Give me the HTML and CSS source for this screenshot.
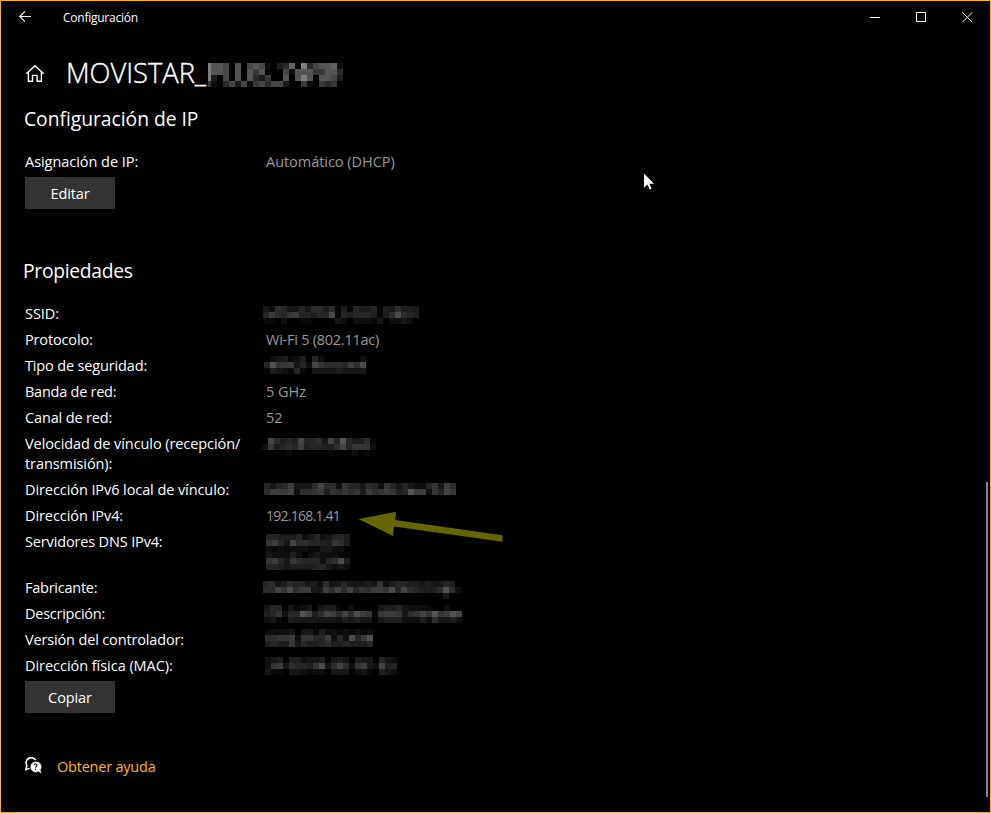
FILE: index.html
```
<!DOCTYPE html>
<html lang="es">
<head>
<meta charset="utf-8">
<title>Configuración</title>
<link rel="stylesheet" href="styles.css">
</head>
<body>
<div class="window">
  <header class="titlebar">
    <svg class="back" width="14" height="12" viewBox="0 0 14 12"><path d="M13 5.5H1.7M6.9 .3 1.7 5.5l5.2 5.2"/></svg>
    <span class="app-name">Configuración</span>
    <svg class="caption" width="11" height="11" viewBox="0 0 11 11"><path d="M0 5.5h10"/></svg>
    <svg class="caption" width="11" height="11" viewBox="0 0 11 11"><path d="M.5 .5h9v9h-9z"/></svg>
    <svg class="caption" width="11" height="11" viewBox="0 0 11 11"><path d="M.3 .3l10 10M10.3 .3l-10 10"/></svg>
  </header>

  <div class="page-title">
    <svg class="home" width="20" height="20" viewBox="0 0 20 20"><path d="M1.3 10.8 10 2.8l8.7 8M3.4 9.2v9h4.1v-5.8h4.6v5.8h4.3v-9"/></svg>
    <h1>MOVISTAR_</h1>
    <svg class="mosaic" data-step="14" data-crop="3" data-rows="96650605651023709356671 96650606460005166644663 92050606324006069606652 41035251453552004104340"></svg>
  </div>

  <main>
    <h2>Configuración de IP</h2>
    <dl class="list">
      <div class="row"><dt>Asignación de IP:</dt><dd>Automático (DHCP)</dd></div>
    </dl>
    <button type="button">Editar</button>

    <h2 class="props">Propiedades</h2>
    <dl class="list">
      <div class="row"><dt>SSID:</dt><dd><svg class="mosaic" data-x="-3" data-y="2" data-rows="32653353664614154450436443 58657855455a1545554146a654 11020011000032022213022320"></svg></dd></div>
      <div class="row"><dt class="snug">Protocolo:</dt><dd class="tight">Wi-Fi 5 (802.11ac)</dd></div>
      <div class="row"><dt class="snug">Tipo de seguridad:</dt><dd><svg class="mosaic" data-x="-2" data-y="0" data-rows="02341240520000002 5b77835297666586a 14321510333343333"></svg></dd></div>
      <div class="row"><dt class="tight">Banda de red:</dt><dd>5 GHz</dd></div>
      <div class="row"><dt class="snug">Canal de red:</dt><dd>52</dd></div>
      <div class="row"><dt class="near">Velocidad de vínculo (recepción/<br>transmisión):</dt><dd><svg class="mosaic" data-x="-4" data-y="4" data-rows="0964549556395b54461 2745658455446957772 0000100000010002010"></svg></dd></div>
      <div class="row"><dt class="near">Dirección IPv6 local de vínculo:</dt><dd><svg class="mosaic" data-x="-2" data-y="3" data-rows="53568333696627553652753532257386 688892667847676748678745b8827597"></svg></dd></div>
      <div class="row"><dt class="near">Dirección IPv4:</dt><dd class="address">192.168.1.41
        <svg class="arrow" width="146" height="34" viewBox="0 0 146 34"><path d="M.5 8 38 .8 37.2 9 144.5 24.2v6.6L36 15.5l-1 9.5z"/></svg></dd></div>
      <div class="row tall"><dt class="snug">Servidores DNS IPv4:</dt><dd><svg class="mosaic" data-x="0" data-y="2" data-rows="55444523523554 78539665544764 21212221133220 32224202322211 785376555256a4 55434444553232"></svg></dd></div>
      <div class="row"><dt class="tight">Fabricante:</dt><dd><svg class="mosaic" data-x="-3" data-y="3" data-rows="563465534263353334372455443433540 6697a6883386969576887a59654446b62 000000000000000000000000000000300"></svg></dd></div>
      <div class="row"><dt class="tight">Descripción:</dt><dd><svg class="mosaic" data-x="-2" data-y="1" data-rows="355031230344102000034453222100200 457255b94698696a871788736797b78b9 231043333333243433034442224263342"></svg></dd></div>
      <div class="row"><dt class="snug">Versión del controlador:</dt><dd><svg class="mosaic" data-x="-1" data-y="-1" data-rows="122230331422121212 66778277558252a58b 454473544564454445"></svg></dd></div>
      <div class="row"><dt>Dirección física (MAC):</dt><dd><svg class="mosaic" data-x="-1" data-y="1" data-rows="2340442334034304330532 278365547a369627832945 3110332122033302310432"></svg></dd></div>
    </dl>
    <button type="button">Copiar</button>

    <div class="help">
      <svg width="18" height="18" viewBox="0 0 18 18"><path class="bubble-line" d="M10.6 3A5 5 0 0 0 1.9 8.7L.8 12.6 4.6 11.4"/><path class="bubble" d="M10.6 4.4a5.5 5.5 0 1 0 2.6 10.4l3.5 1.9-1-3.8a5.5 5.5 0 0 0-5.1-8.5z"/><path class="question" d="M9 8.2c.2-1.8 3.2-1.6 3 .1-.1 1-1.4 1.1-1.4 2.4M10.6 11.8V13"/></svg>
      <a>Obtener ayuda</a>
    </div>
  </main>
  <div class="scrollbar"></div>
  <svg class="cursor" width="12" height="18" viewBox="0 0 12 18"><path d="M0 .5v14.2l3.4-3.1 2.2 5 2-.9-2.2-4.9H10z"/></svg>
</div>
<script src="mosaic.js"></script>
</body>
</html>
```
FILE: styles.css
```
* { box-sizing: border-box; }
body { margin: 0; background: #000; color: #fff; font-family: "Open Sans", "Noto Sans", sans-serif; }
.window { position: relative; width: 991px; height: 813px; border: 1px solid #ffb900; background: #000; overflow: hidden; }
svg { display: block; flex: none; fill: none; stroke: #fff; }

.titlebar { display: flex; align-items: center; height: 32px; padding: 0 17px; }
.back { stroke-width: 1.1; }
.app-name { margin: 1px auto 0 31px; font-size: 12px; letter-spacing: -.25px; }
.caption { margin-left: 35px; }

.page-title { display: flex; align-items: flex-start; height: 62px; padding: 16px 0 0 24px; }
.home { margin-top: 14px; stroke-width: 1.4; }
h1 { width: 142px; margin: 4px 0 0 21px; font-size: 27.3px; font-weight: 300; line-height: 40px; white-space: nowrap; -webkit-text-stroke: .35px #fff; }
.page-title .mosaic { margin-top: 14px; }

main { padding-left: 24px; }
h2 { margin: 10px 0 0 -1px; font-size: 19.3px; font-weight: 400; line-height: 28px; letter-spacing: -.03px; }
h2.props { margin: 48px 0 0 -2px; letter-spacing: -.3px; }
.list { display: flex; flex-direction: column; gap: 6px; margin: 19px 0 5px; }
.row { display: flex; min-height: 20px; font-size: 14.5px; line-height: 20px; letter-spacing: -.04px; }
.row.tall { min-height: 40px; }
dt { width: 241px; white-space: nowrap; }
dd { height: 20px; margin: 0; color: #999; white-space: nowrap; position: relative; }
.near { letter-spacing: -.08px; }
.snug { letter-spacing: -.15px; }
.tight { letter-spacing: -.25px; }
.address { font-size: 14px; letter-spacing: -.75px; }
button { display: block; width: 90px; height: 32px; padding: 1px 0 0; border: 0; background: #333; color: #fff; font: 14.5px/31px "Open Sans", sans-serif; letter-spacing: -.1px; }
.help { display: flex; align-items: center; margin-top: 41px; height: 24px; font-size: 14.5px; letter-spacing: -.22px; }
.help a { margin-left: 14px; color: #ffb900; }
.bubble-line { stroke-width: 1.5; }
.bubble { fill: #fff; stroke: #000; stroke-width: .5; }
.question { stroke: #000; stroke-width: 1.1; }

.mosaic { stroke: none; }
.arrow { position: absolute; left: 92px; top: 5px; fill: #666600; stroke: none; }
.scrollbar { position: absolute; left: 985px; top: 481px; width: 2px; height: 315px; background: #858585; }
.cursor { position: absolute; left: 643px; top: 172px; fill: #fff; stroke: none; }
```
FILE: mosaic.js
```
// Draws each obscured value as a grid of 6px grey cells, one hex digit per cell.
document.querySelectorAll('.mosaic').forEach(function (svg) {
  var rows = svg.dataset.rows.split(' ');
  var step = Number(svg.dataset.step || 7.5);
  var crop = Number(svg.dataset.crop || 0);
  var cols = Math.max.apply(null, rows.map(function (r) { return r.length; }));
  var w = cols * 6 - crop, h = rows.length * 6;
  svg.setAttribute('width', w);
  svg.setAttribute('height', h);
  svg.setAttribute('viewBox', crop + ' 0 ' + w + ' ' + h);
  if (svg.dataset.x) {
    svg.style.marginLeft = svg.dataset.x + 'px';
    svg.style.marginTop = svg.dataset.y + 'px';
  }
  rows.forEach(function (row, y) {
    row.split('').forEach(function (c, x) {
      var g = Math.round(parseInt(c, 16) * step);
      var r = document.createElementNS('http://www.w3.org/2000/svg', 'rect');
      r.setAttribute('x', x * 6);
      r.setAttribute('y', y * 6);
      r.setAttribute('width', 6);
      r.setAttribute('height', 6);
      r.setAttribute('fill', 'rgb(' + g + ',' + g + ',' + g + ')');
      svg.appendChild(r);
    });
  });
});
```
